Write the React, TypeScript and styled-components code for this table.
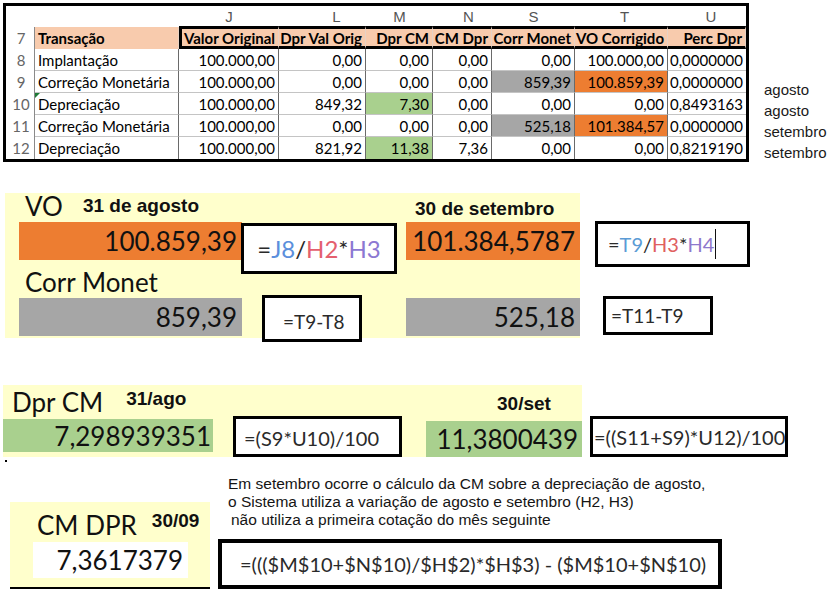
import React from 'react';
import styled, { createGlobalStyle } from 'styled-components';

const CALIBRI = `Lato, "Open Sans", sans-serif`;
const ARIAL = `"Liberation Sans", Arial, sans-serif`;

const GlobalStyle = createGlobalStyle`
  html, body {
    margin: 0;
    padding: 0;
    background: #ffffff;
  }
  body {
    width: 833px;
    height: 601px;
    overflow: hidden;
    font-family: ${CALIBRI};
    color: #000;
  }
`;

const Page = styled.div`
  display: flex;
  flex-direction: column;
  align-items: flex-start;
`;

/* ---------- spreadsheet ---------- */

const TopRow = styled.div`
  display: flex;
  align-items: flex-start;
  margin: 3px 0 0 3px;
`;

const Sheet = styled.div`
  display: grid;
  grid-template-columns: 29px 144px 100px 87px 67px 59px 83px 93px 78px;
  grid-template-rows: 21px 22px repeat(5, 22px);
  border: 3px solid #000;
  font-family: ${CALIBRI};
  font-size: 15px;
  font-variant-numeric: tabular-nums;
`;

const ColLetter = styled.div<{ $shift?: number }>`
  display: flex;
  align-items: center;
  justify-content: center;
  padding-left: ${p => (p.$shift || 0) * 2}px;
  font-family: ${ARIAL};
  font-size: 15px;
  color: #555;
`;

const RowNum = styled.div`
  display: flex;
  align-items: center;
  justify-content: center;
  padding-left: 2px;
  color: #666;
  border-right: 1px solid #8a8a8a;
`;

const HeadCell = styled.div<{ $boxed?: boolean; $first?: boolean; $left?: boolean }>`
  display: flex;
  align-items: center;
  justify-content: ${p => (p.$left ? 'flex-start' : 'flex-end')};
  padding: 0 3px;
  background: #f8cbad;
  font-weight: 700;
  white-space: nowrap;
  border-top: ${p => (p.$boxed ? '3px solid #000' : 'none')};
  border-bottom: ${p => (p.$boxed ? '3px solid #000' : 'none')};
  border-left: ${p => (p.$first ? '3px solid #000' : 'none')};
  border-right: 1px solid #e8d2c4;
  margin-top: ${p => (p.$boxed ? '-1px' : '0')};
`;

const Cell = styled.div<{ $fill?: string; $left?: boolean; $lastCol?: boolean; $lastRow?: boolean; $flag?: boolean }>`
  position: relative;
  display: flex;
  align-items: center;
  justify-content: ${p => (p.$left ? 'flex-start' : 'flex-end')};
  padding: 0 3px;
  background: ${p => p.$fill || '#fff'};
  white-space: nowrap;
  border-right: ${p => (p.$lastCol ? 'none' : '1px solid #6a6a6a')};
  border-bottom: ${p => (p.$lastRow ? 'none' : '1px solid #c4c4c4')};

  &::before {
    content: '';
    display: ${p => (p.$flag ? 'block' : 'none')};
    position: absolute;
    left: 0;
    top: 0;
    border-top: 5px solid #1e7a36;
    border-right: 5px solid transparent;
  }
`;

const Notes = styled.div`
  display: flex;
  flex-direction: column;
  margin-left: 15px;
  padding-top: 76px;
  font-family: ${ARIAL};
  font-size: 15px;
  line-height: 21px;
  color: #1a1a1a;
`;

/* ---------- shared blocks ---------- */

const BigLabel = styled.span`
  font-family: ${CALIBRI};
  font-size: 26px;
  line-height: 28px;
  color: #111;
`;

const DateLabel = styled.span<{ $lift?: number }>`
  margin-bottom: ${p => p.$lift || 0}px;
  font-family: ${ARIAL};
  font-weight: 700;
  font-size: 19px;
  line-height: 22px;
  color: #111;
`;

const ValueBar = styled.div<{ $fill: string; $h: number }>`
  box-sizing: border-box;
  height: ${p => p.$h}px;
  display: flex;
  align-items: center;
  justify-content: flex-end;
  padding-right: 5px;
  background: ${p => p.$fill};
  font-family: ${CALIBRI};
  font-size: 26px;
  font-variant-numeric: tabular-nums;
  color: #111;
`;

const FormulaBox = styled.div<{ $w: number; $h: number; $size: number }>`
  box-sizing: border-box;
  width: ${p => p.$w}px;
  height: ${p => p.$h}px;
  display: flex;
  align-items: center;
  border: 3px solid #000;
  background: #fff;
  font-family: ${CALIBRI};
  font-size: ${p => p.$size}px;
  color: #2a2a2a;
  white-space: nowrap;
`;

const Ref = styled.span<{ $c: string }>`
  color: ${p => p.$c};
`;

const Caret = styled.span`
  display: inline-block;
  width: 1px;
  height: 30px;
  margin-left: 1px;
  background: #111;
  vertical-align: middle;
`;

/* ---------- VO / Corr Monet ---------- */

const VoSection = styled.div`
  display: flex;
  align-items: flex-start;
  margin-top: 30px;
`;

const VoPanel = styled.div`
  margin-left: 5px;
  width: 575px;
  display: grid;
  grid-template-columns: 14px 223px 164px 174px;
  grid-template-rows: 29px 38px 38px 38px;
  grid-template-areas:
    '. lab1 lab1 lab2'
    '. bar1 box1 bar2'
    '. lab3 lab3 .'
    '. bar3 box2 bar4';
  align-items: start;
  padding-bottom: 2px;
  background: #ffffcc;
`;

const Area = styled.div<{ $area: string }>`
  grid-area: ${p => p.$area};
`;

const LabelRow = styled(Area)`
  display: flex;
  align-items: flex-end;
  gap: 20px;
  height: 100%;
  padding-left: 6px;
  padding-bottom: 2px;
  box-sizing: border-box;
`;

const AgoFormula = styled(FormulaBox)`
  grid-area: box1;
  margin: 1px 0 -14px -1px;
  justify-content: center;
`;

const DiffFormula = styled(FormulaBox)`
  grid-area: box2;
  margin: -3px 0 -6px 20px;
  align-items: flex-end;
  padding: 0 0 6px 18px;
`;

const VoSide = styled.div`
  display: flex;
  flex-direction: column;
  align-items: flex-start;
  margin-left: 15px;
  padding-top: 28px;
  gap: 29px;
`;

const SetFormula = styled(FormulaBox)`
  padding-left: 10px;
`;

const SetDiffFormula = styled(FormulaBox)`
  margin-left: 8px;
  padding-left: 5px;
`;

/* ---------- Dpr CM ---------- */

const DprSection = styled.div`
  display: flex;
  align-items: flex-start;
  margin-top: 47px;
`;

const DprPanel = styled.div`
  margin-left: 3px;
  display: grid;
  grid-template-columns: 210px 213px 156px;
  grid-template-rows: 34px 38px;
  grid-template-areas:
    'lab lab date'
    'bar box bar2';
  align-items: start;
  background: #ffffcc;
`;

const DprLabelRow = styled(LabelRow)`
  gap: 23px;
  padding-left: 9px;
  padding-bottom: 3px;
`;

const SetDate = styled(Area)`
  display: flex;
  align-items: flex-end;
  height: 100%;
  padding: 0 0 4px 71px;
  box-sizing: border-box;
`;

const AgoDprFormula = styled(FormulaBox)`
  grid-area: box;
  margin: -3px 0 0 20px;
  padding: 3px 0 0 8px;
`;

const SetDprFormula = styled(FormulaBox)`
  margin: 31px 0 0 8px;
  padding-left: 1px;
`;

const Dot = styled.div`
  width: 2px;
  height: 2px;
  margin: 3px 0 0 5px;
  background: #000;
`;

/* ---------- CM DPR ---------- */

const CmSection = styled.div`
  display: grid;
  grid-template-columns: 218px auto;
  margin-top: 13px;
`;

const CmPanel = styled.div`
  margin: 27px 0 0 10px;
  width: 200px;
  display: flex;
  flex-direction: column;
  background: #ffffcc;
  border-bottom: 2px solid #000;
`;

const CmHead = styled.div`
  height: 40px;
  box-sizing: border-box;
  display: flex;
  align-items: flex-end;
  gap: 15px;
  padding: 0 0 3px 27px;
`;

const CmValue = styled.div`
  margin-left: 23px;
  width: 155px;
  height: 36px;
  display: flex;
  align-items: center;
  justify-content: flex-end;
  padding-right: 5px;
  box-sizing: border-box;
  background: #fff;
  font-family: ${CALIBRI};
  font-size: 26px;
  font-variant-numeric: tabular-nums;
  color: #111;
`;

const CmRight = styled.div`
  display: flex;
  flex-direction: column;
  align-items: flex-start;
`;

const NoteLine = styled.div<{ $indent?: number }>`
  padding-left: ${p => 10 + (p.$indent || 0)}px;
  font-family: ${ARIAL};
  font-size: 15.5px;
  line-height: 18px;
  color: #151515;
  white-space: nowrap;
`;

const BigFormula = styled(FormulaBox)`
  margin-top: 10px;
  border-width: 4px;
  padding-left: 18px;
`;

const GRAY = '#a6a6a6';
const ORANGE = '#ed7d31';
const GREEN = '#a9d08e';

const letters: [string, number][] = [
  ['J', 0],
  ['L', 14],
  ['M', 0],
  ['N', 6],
  ['S', -3],
  ['T', 3],
  ['U', 4],
];
const heads = ['Valor Original', 'Dpr Val Orig', 'Dpr CM', 'CM Dpr', 'Corr Monet', 'VO Corrigido', 'Perc Dpr'];

type Row = { n: string; label: string; values: string[]; fills?: Record<number, string>; flag?: boolean };

const rows: Row[] = [
  { n: '8', label: 'Implantação', values: ['100.000,00', '0,00', '0,00', '0,00', '0,00', '100.000,00', '0,0000000'] },
  {
    n: '9',
    label: 'Correção Monetária',
    values: ['100.000,00', '0,00', '0,00', '0,00', '859,39', '100.859,39', '0,0000000'],
    fills: { 4: GRAY, 5: ORANGE },
  },
  {
    n: '10',
    label: 'Depreciação',
    values: ['100.000,00', '849,32', '7,30', '0,00', '0,00', '0,00', '0,8493163'],
    fills: { 2: GREEN },
    flag: true,
  },
  {
    n: '11',
    label: 'Correção Monetária',
    values: ['100.000,00', '0,00', '0,00', '0,00', '525,18', '101.384,57', '0,0000000'],
    fills: { 4: GRAY, 5: ORANGE },
  },
  {
    n: '12',
    label: 'Depreciação',
    values: ['100.000,00', '821,92', '11,38', '7,36', '0,00', '0,00', '0,8219190'],
    fills: { 2: GREEN },
  },
];

const App: React.FC = () => {
  return (
    <>
      <GlobalStyle />
      <Page>
        <TopRow>
          <Sheet>
            <ColLetter />
            <ColLetter />
            {letters.map(([l, s]) => (
              <ColLetter key={l} $shift={s}>
                {l}
              </ColLetter>
            ))}

            <RowNum>7</RowNum>
            <HeadCell $left>Transação</HeadCell>
            {heads.map((h, i) => (
              <HeadCell key={h} $boxed $first={i === 0}>
                {h}
              </HeadCell>
            ))}

            {rows.map((r, ri) => {
              const lastRow = ri === rows.length - 1;
              return (
                <React.Fragment key={r.n}>
                  <RowNum>{r.n}</RowNum>
                  <Cell $left $lastRow={lastRow} $flag={r.flag}>
                    {r.label}
                  </Cell>
                  {r.values.map((v, ci) => (
                    <Cell
                      key={ci}
                      $fill={r.fills?.[ci]}
                      $lastCol={ci === r.values.length - 1}
                      $lastRow={lastRow}
                    >
                      {v}
                    </Cell>
                  ))}
                </React.Fragment>
              );
            })}
          </Sheet>
          <Notes>
            <span>agosto</span>
            <span>agosto</span>
            <span>setembro</span>
            <span>setembro</span>
          </Notes>
        </TopRow>

        <VoSection>
          <VoPanel>
            <LabelRow $area="lab1">
              <BigLabel>VO</BigLabel>
              <DateLabel $lift={3}>31 de agosto</DateLabel>
            </LabelRow>
            <LabelRow $area="lab2" style={{ paddingLeft: 9 }}>
              <DateLabel>30 de setembro</DateLabel>
            </LabelRow>

            <Area $area="bar1">
              <ValueBar $fill={ORANGE} $h={38}>100.859,39</ValueBar>
            </Area>
            <AgoFormula $w={156} $h={51} $size={24}>
              =<Ref $c="#5b8fdc">J8</Ref>/<Ref $c="#e4606e">H2</Ref>*<Ref $c="#8c78d2">H3</Ref>
            </AgoFormula>
            <Area $area="bar2">
              <ValueBar $fill={ORANGE} $h={38}>101.384,5787</ValueBar>
            </Area>

            <LabelRow $area="lab3">
              <BigLabel>Corr Monet</BigLabel>
            </LabelRow>

            <Area $area="bar3">
              <ValueBar $fill={GRAY} $h={38}>859,39</ValueBar>
            </Area>
            <DiffFormula $w={100} $h={47} $size={19}>=T9-T8</DiffFormula>
            <Area $area="bar4">
              <ValueBar $fill={GRAY} $h={38}>525,18</ValueBar>
            </Area>
          </VoPanel>

          <VoSide>
            <SetFormula $w={155} $h={46} $size={20}>
              =<Ref $c="#5b9bd5">T9</Ref>/<Ref $c="#e06060">H3</Ref>*<Ref $c="#8e78cc">H4</Ref>
              <Caret />
            </SetFormula>
            <SetDiffFormula $w={110} $h={39} $size={19}>=T11-T9</SetDiffFormula>
          </VoSide>
        </VoSection>

        <DprSection>
          <DprPanel>
            <DprLabelRow $area="lab">
              <BigLabel>Dpr CM</BigLabel>
              <DateLabel $lift={6}>31/ago</DateLabel>
            </DprLabelRow>
            <SetDate $area="date">
              <DateLabel>30/set</DateLabel>
            </SetDate>

            <Area $area="bar">
              <ValueBar $fill={GREEN} $h={33} style={{ paddingRight: 2 }}>
                7,298939351
              </ValueBar>
            </Area>
            <AgoDprFormula $w={169} $h={41} $size={20}>=(S9*U10)/100</AgoDprFormula>
            <Area $area="bar2" style={{ marginTop: 2 }}>
              <ValueBar $fill={GREEN} $h={36} style={{ paddingRight: 4 }}>
                11,3800439
              </ValueBar>
            </Area>
          </DprPanel>
          <SetDprFormula $w={198} $h={41} $size={20}>=((S11+S9)*U12)/100</SetDprFormula>
        </DprSection>

        <Dot />

        <CmSection>
          <CmPanel>
            <CmHead>
              <BigLabel>CM DPR</BigLabel>
              <DateLabel $lift={7}>30/09</DateLabel>
            </CmHead>
            <CmValue>7,3617379</CmValue>
          </CmPanel>
          <CmRight>
            <NoteLine>Em setembro ocorre o cálculo da CM sobre a depreciação de agosto,</NoteLine>
            <NoteLine>o Sistema utiliza a variação de agosto e setembro (H2, H3)</NoteLine>
            <NoteLine $indent={3}>não utiliza a primeira cotação do mês seguinte</NoteLine>
            <BigFormula $w={504} $h={50} $size={20}>
              =((($M$10+$N$10)/$H$2)*$H$3) - ($M$10+$N$10)
            </BigFormula>
          </CmRight>
        </CmSection>
      </Page>
    </>
  );
};

export default App;
